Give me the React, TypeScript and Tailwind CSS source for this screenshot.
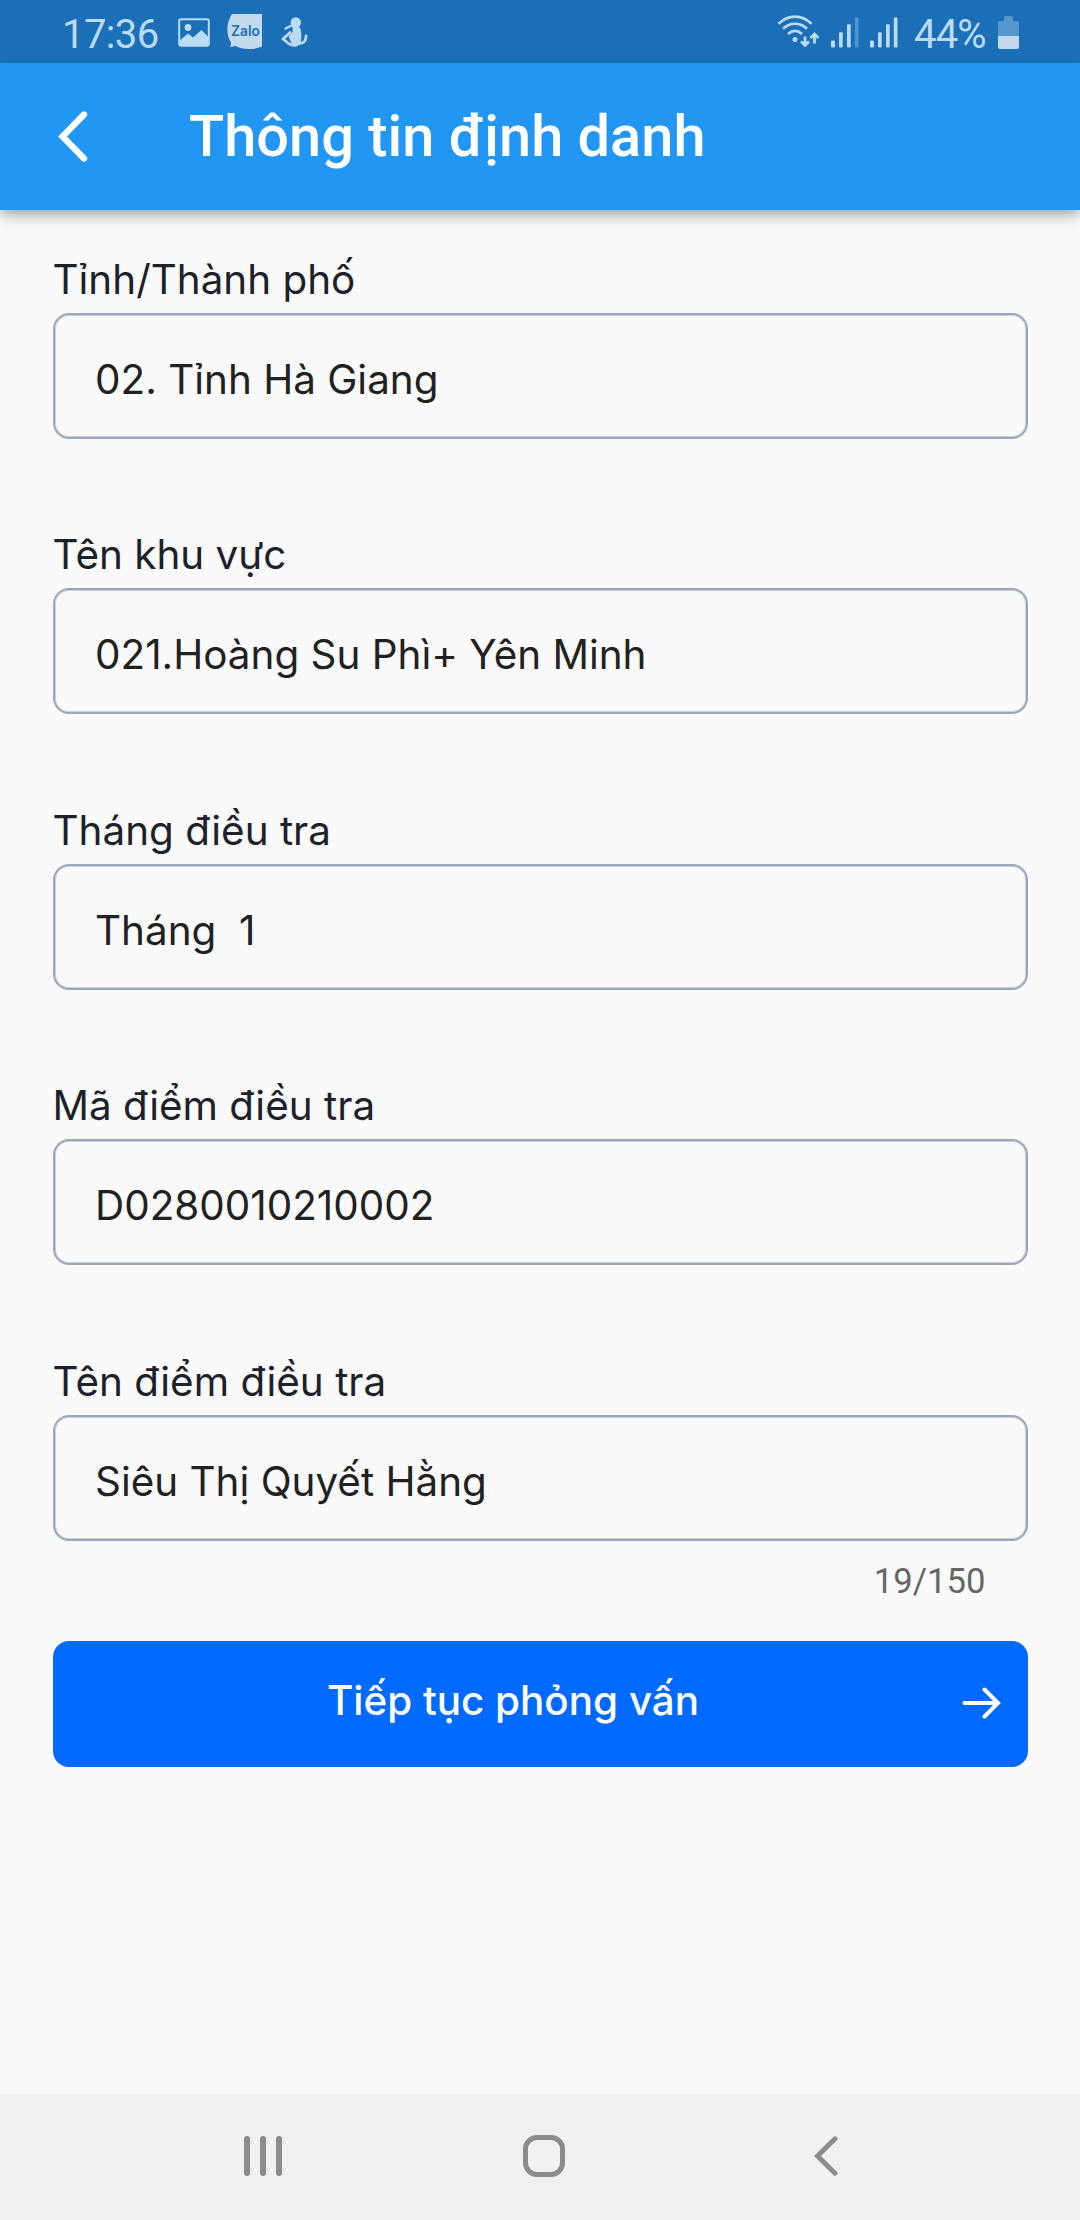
import React, { useState } from 'react'

interface Field {
  id: string
  label: string
  value: string
}

const fields: Field[] = [
  { id: 'province', label: 'Tỉnh/Thành phố', value: '02. Tỉnh Hà Giang' },
  { id: 'area', label: 'Tên khu vực', value: '021.Hoàng Su Phì+ Yên Minh' },
  { id: 'month', label: 'Tháng điều tra', value: 'Tháng  1' },
  { id: 'code', label: 'Mã điểm điều tra', value: 'D0280010210002' },
  { id: 'name', label: 'Tên điểm điều tra', value: 'Siêu Thị Quyết Hằng' },
]

const NAME_MAX = 150

function GalleryIcon() {
  return (
    <svg className="w-8 h-[29px]" viewBox="0 0 32 29" fill="none">
      <rect x="1.2" y="1.2" width="29.6" height="26.6" rx="2" stroke="#bbdaf3" strokeWidth="2" />
      <circle cx="10" cy="9.5" r="3.4" fill="#bbdaf3" />
      <path d="M1.5 22.5L10 15.5L15 19.5L23.5 12L30.5 19V28H1.5Z" fill="#bbdaf3" />
    </svg>
  )
}

function ZaloIcon() {
  return (
    <svg className="w-[35px] h-[35px]" viewBox="0 0 35 35">
      <path d="M5 0H35V32.5C31 34.3 26 35.2 21 35C16 34.9 11 33.8 8 31.8C6.5 32.8 4.5 33 2.8 32.7C3.8 31.5 4.2 30 3.9 28.5C-1 20-1 9 5 0Z" fill="#c3d9ed" />
      <text x="18.5" y="22" textAnchor="middle" fill="#1a6fb7" fontFamily="Inter, sans-serif" fontSize="14.2" fontWeight="600" textLength="29" lengthAdjust="spacingAndGlyphs">Zalo</text>
    </svg>
  )
}

function FigureIcon() {
  return (
    <svg className="w-[27px] h-[31px]" viewBox="0 0 27 31" fill="none">
      <circle cx="14.8" cy="5.5" r="5.2" fill="#bbdaf3" />
      <path d="M11.5 9.5H18C21 13 20.5 18 20 24C19.5 27 17 29.8 13.5 29.8C10.5 29.8 8.500 28.8 7 27L10.500 26L7.500 19.5L11.5 15Z" fill="#bbdaf3" />
      <path d="M4.5 11.5L10.5 8.5" stroke="#bbdaf3" strokeWidth="2.5" strokeLinecap="round" />
      <path d="M9 15.5L2 22L9 27.5" stroke="#bbdaf3" strokeWidth="2.8" strokeLinecap="round" strokeLinejoin="round" />
      <path d="M18 26.5C22.5 26.5 25.2 24 25 19" stroke="#bbdaf3" strokeWidth="2.8" strokeLinecap="round" />
    </svg>
  )
}

function WifiIcon() {
  return (
    <svg className="w-[42px] h-8" viewBox="0 0 42 32" fill="none" stroke="#bbdaf3">
      <path d="M1.5 8.7C11.5-.8 24.5-.8 34.5 8.7" strokeWidth="2.6" />
      <path d="M6 13.8C13 7 23 7 30 13.8" strokeWidth="2.6" />
      <path d="M11 19C15.5 15 20.5 15 25 19" strokeWidth="2.6" />
      <circle cx="18" cy="24.5" r="2.5" fill="#bbdaf3" stroke="none" />
      <path d="M28 21.5V29.5M24 26.5L28 30.5L32 26.5M37.5 28.5V20M33.5 23L37.5 19L41.5 23" strokeWidth="2.8" />
    </svg>
  )
}

function SignalIcon({ weak = false }: { weak?: boolean }) {
  return (
    <svg className="w-7 h-[31px]" viewBox="0 0 28 31" fill="#bbdaf3">
      <rect x="0" y="23.5" width="4" height="7" rx="1.2" />
      <rect x="8" y="15.3" width="3.7" height="15.2" rx="1.2" />
      <rect x="16" y="7.3" width="3.7" height="23.2" rx="1.2" />
      <rect x="23.8" y="0.4" width="3.7" height="30.1" rx="1.2" opacity={weak ? 0.35 : 1} />
    </svg>
  )
}

function BatteryIcon() {
  return (
    <svg className="w-[21px] h-[33px]" viewBox="0 0 21 33">
      <path d="M6 1.5Q6 0 7.5 0H13.5Q15 0 15 1.5V5H19.5Q21 5 21 6.5V20H0V6.5Q0 5 1.5 5H6Z" fill="#5596cc" />
      <path d="M0 20H21V31Q21 33 19 33H2Q0 33 0 31Z" fill="#c3d9ed" />
    </svg>
  )
}

function StatusBar() {
  return (
    <div className="flex h-[63px] items-start bg-[#1a6fb7] text-[#bbdaf3] font-[Roboto,sans-serif]">
      <span className="ml-[62px] mt-[11px] w-[97px] text-[40px] leading-[48px] tracking-[-0.6px]">17:36</span>
      <span className="ml-[19px] mt-[18px]"><GalleryIcon /></span>
      <span className="ml-[17px] mt-[14px]"><ZaloIcon /></span>
      <span className="ml-[19px] mt-[17px]"><FigureIcon /></span>
      <span className="ml-auto mt-[15px]"><WifiIcon /></span>
      <span className="ml-[12px] mt-[17px]"><SignalIcon weak /></span>
      <span className="ml-[11px] mt-[17px]"><SignalIcon /></span>
      <span className="ml-[16px] mt-[11px] w-[74px] text-[40px] leading-[48px] tracking-[-0.8px]">44%</span>
      <span className="ml-[10px] mr-[61px] mt-4"><BatteryIcon /></span>
    </div>
  )
}

function AppHeader({ title }: { title: string }) {
  return (
    <header className="relative flex h-[147px] items-center bg-[#2196f3] text-white shadow-[0_5px_10px_-2px_rgba(0,0,0,0.25),0_10px_14px_rgba(0,0,0,0.12)]">
      <button className="ml-[58px] w-8" aria-label="Quay lại">
        <svg className="block w-8 h-[52px]" viewBox="0 0 32 52" fill="none">
          <path d="M26 3.5L4.5 25.500L26 47.500" stroke="white" strokeWidth="6.3" strokeLinecap="round" />
        </svg>
      </button>
      <h1 className="ml-[99px] -mt-0.5 whitespace-nowrap font-[Roboto,sans-serif] text-[57.75px] font-medium leading-[68px]">
        {title}
      </h1>
    </header>
  )
}

function TextField({ field, onChange }: { field: Field; onChange: (value: string) => void }) {
  return (
    <div className="flex h-[275.625px] flex-col">
      <label htmlFor={field.id} className="h-[63px] whitespace-nowrap pt-[5px] text-[40.425px] leading-[49px] text-[#1d2129]">
        {field.label}
      </label>
      <input
        id={field.id}
        value={field.value}
        onChange={(e) => onChange(e.target.value)}
        className="h-[126px] w-full rounded-2xl border-2 border-[#9aa7ba] bg-transparent px-[40.5px] pt-[7px] text-[40.425px] text-[#212121] shadow-[inset_0_0_0_1px_rgba(154,167,186,0.5)] outline-none"
      />
    </div>
  )
}

function NavigationBar() {
  return (
    <nav className="flex h-[126px] items-center bg-[#f1f1f1] pb-[2px]">
      <svg className="ml-[244px] h-10 w-[38px]" viewBox="0 0 38 40" fill="#8c8c8c">
        <rect x="0" y="0" width="6" height="40" rx="3" />
        <rect x="16" y="0" width="6" height="40" rx="3" />
        <rect x="32" y="0" width="6" height="40" rx="3" />
      </svg>
      <svg className="ml-[241px] h-[42px] w-[42px]" viewBox="0 0 42 42" fill="none">
        <rect x="2.5" y="2.5" width="37" height="37" rx="11.5" stroke="#8c8c8c" strokeWidth="5" />
      </svg>
      <svg className="ml-[249px] h-10 w-6" viewBox="0 0 24 40" fill="none">
        <path d="M21 2.8L3.5 20L21 37.2" stroke="#8c8c8c" strokeWidth="5" strokeLinecap="round" />
      </svg>
    </nav>
  )
}

export default function App() {
  const [data, setData] = useState<Field[]>(fields)

  const handleChange = (id: string, value: string) => {
    setData(data.map((field) => (field.id === id ? { ...field, value } : field)))
  }

  const name = data[data.length - 1].value

  return (
    <div className="flex h-[2220px] w-[1080px] flex-col overflow-hidden bg-[#fafafa]">
      <StatusBar />
      <AppHeader title="Thông tin định danh" />

      <main className="flex flex-1 flex-col px-[52.5px] pt-[39.5px] font-[Inter,sans-serif]">
        <div className="h-[1292px]">
          {data.map((field) => (
            <TextField key={field.id} field={field} onChange={(value) => handleChange(field.id, value)} />
          ))}
        </div>
        <div className="h-[99px] pr-[42px] pt-[18px] text-right font-[Roboto,sans-serif] text-[34.65px] leading-[42px] text-[#666666]">
          {name.length}/{NAME_MAX}
        </div>
        <button className="flex h-[126px] shrink-0 items-center rounded-2xl bg-[#006aff] text-white">
          <span className="flex-1 -mt-[6px] pl-[14px] text-center text-[40.425px] font-medium leading-[49px]">Tiếp tục phỏng vấn</span>
          <svg className="-mt-0.5 ml-[2px] mr-[27px] h-8 w-[39px]" viewBox="0 0 39 32" fill="none">
            <path d="M2.5 16H35.5M22.500 2.500L36 16L22.500 29.500" stroke="white" strokeWidth="4" strokeLinecap="round" />
          </svg>
        </button>
      </main>

      <NavigationBar />
    </div>
  )
}
